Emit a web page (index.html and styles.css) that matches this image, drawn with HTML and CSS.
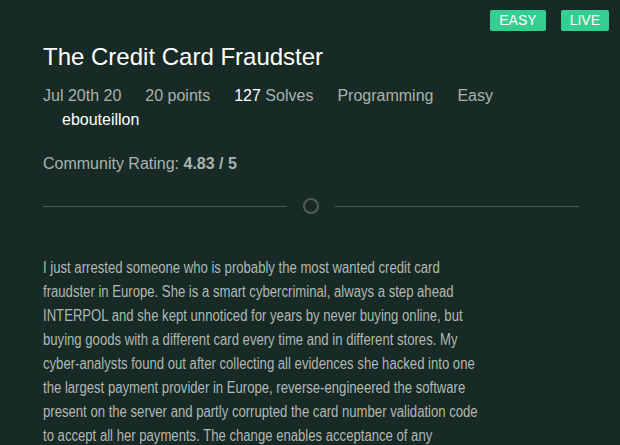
FILE: index.html
```html
<!DOCTYPE html>
<html>
<head>
<meta charset="utf-8">
<link rel="stylesheet" href="styles.css">
</head>
<body>
<div class="page">
  <div class="badges">
    <span class="badge">EASY</span>
    <span class="badge">LIVE</span>
  </div>
  <h1 class="title">The Credit Card Fraudster</h1>
  <div class="meta">
    <span>Jul 20th 20</span>
    <span>20 points</span>
    <span><b class="hl">127</b> Solves</span>
    <span>Programming</span>
    <span>Easy</span>
  </div>
  <div class="author">ebouteillon</div>
  <div class="rating">Community Rating: <b>4.83 / 5</b></div>
  <div class="divider">
    <span class="line"></span>
    <span class="ring"></span>
    <span class="line"></span>
  </div>
  <p class="desc">I just arrested someone who is probably the most wanted credit card fraudster in Europe. She is a smart cybercriminal, always a step ahead INTERPOL and she kept unnoticed for years by never buying online, but buying goods with a different card every time and in different stores. My cyber-analysts found out after collecting all evidences she hacked into one the largest payment provider in Europe, reverse-engineered the software present on the server and partly corrupted the card number validation code to accept all her payments. The change enables acceptance of any</p>
</div>
</body>
</html>
```
FILE: styles.css
```css
html, body {
  margin: 0;
  padding: 0;
  background: #182a25;
  overflow: hidden;
}
.page {
  position: relative;
  padding: 0 41px 0 43px;
  font-family: "Liberation Sans", Arial, sans-serif;
  color: #a9b2ae;
  height: 445px;
}
.badges {
  position: absolute;
  top: 10px;
  right: 11px;
  display: flex;
  gap: 15px;
}
.badge {
  background: #33cf91;
  color: #fff;
  font-size: 14px;
  line-height: 21px;
  padding: 0 9px;
  border-radius: 2px;
}
.title {
  margin: 0;
  padding-top: 43px;
  font-size: 24px;
  font-weight: normal;
  color: #ffffff;
  line-height: 28px;
}
.meta {
  margin-top: 15px;
  display: flex;
  gap: 24px;
  font-size: 16px;
  line-height: 20px;
}
.hl {
  font-weight: normal;
  color: #ffffff;
}
.author {
  margin-top: 4px;
  padding-left: 19px;
  font-size: 16px;
  line-height: 20px;
  color: #ffffff;
}
.rating {
  margin-top: 24px;
  font-size: 16px;
  line-height: 20px;
}
.rating b {
  color: #a9b2ae;
}
.divider {
  margin-top: 24px;
  display: flex;
  align-items: center;
  gap: 16px;
}
.line {
  flex: 1;
  height: 1px;
  background: #4b5c57;
}
.ring {
  width: 12px;
  height: 12px;
  border: 2px solid #4f5d59;
  border-radius: 50%;
}
.desc {
  margin: 42px 0 0;
  font-size: 16px;
  line-height: 24px;
  color: #b0b8b4;
  transform: scaleX(0.82);
  transform-origin: left top;
}
```
